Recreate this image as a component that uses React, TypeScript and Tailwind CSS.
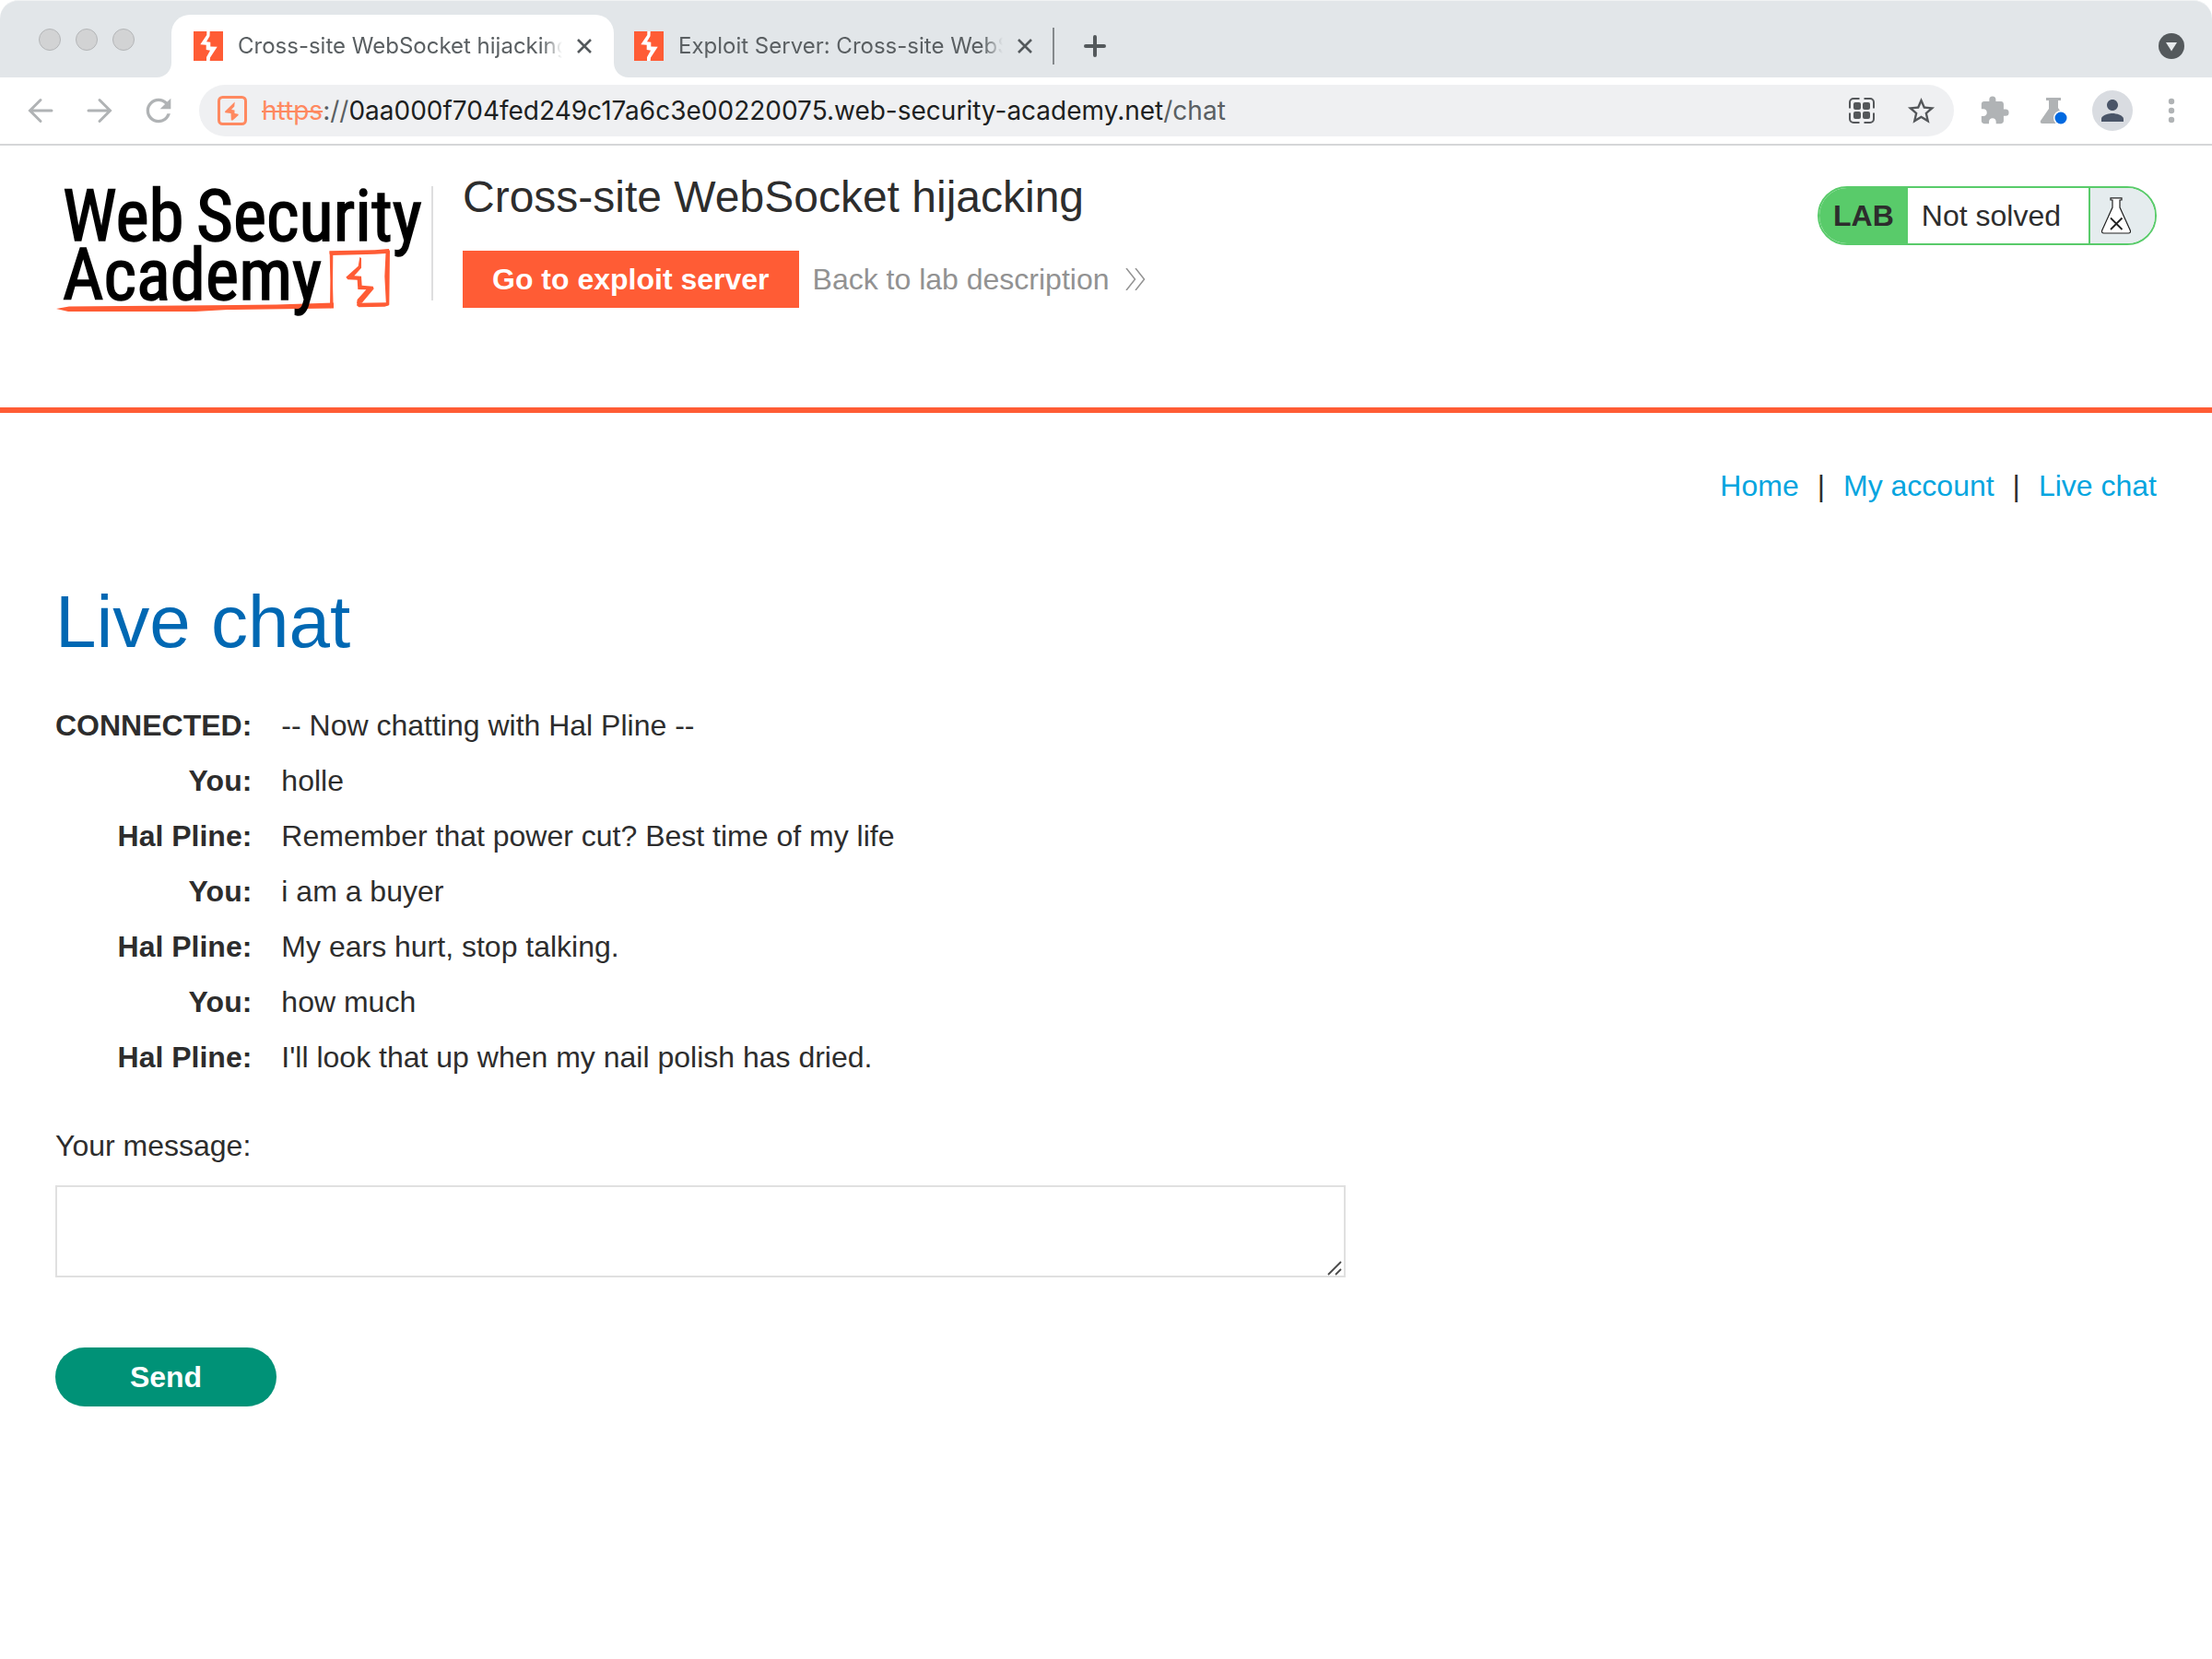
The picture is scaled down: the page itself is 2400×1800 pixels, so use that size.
import { useState } from 'react';
import { MdExtension, MdPerson, MdRefresh, MdStarBorder } from 'react-icons/md';

type Message = {
  from: string;
  text: string;
};

const MESSAGES: Message[] = [
  { from: 'CONNECTED', text: '-- Now chatting with Hal Pline --' },
  { from: 'You', text: 'holle' },
  { from: 'Hal Pline', text: 'Remember that power cut? Best time of my life' },
  { from: 'You', text: 'i am a buyer' },
  { from: 'Hal Pline', text: 'My ears hurt, stop talking.' },
  { from: 'You', text: 'how much' },
  { from: 'Hal Pline', text: "I'll look that up when my nail polish has dried." },
];

const Favicon = () => (
  <svg className="size-8 shrink-0" viewBox="0 0 32 32" aria-hidden="true">
    <rect width="32" height="32" fill="#ff5c35" />
    <path
      d="M14.3 0h3.4l-.2 5.3L14 11.3l4.3.4v4.8l7.4.3L18 28.5l-.3 3.5H14v-4l4-7.3-4.3-.7v-5.3l-6.4-.4L14.3 4z"
      fill="#fff"
    />
  </svg>
);

const CloseIcon = () => (
  <svg className="size-4" viewBox="0 0 16 16" fill="none" stroke="currentColor" strokeWidth="2.6" aria-hidden="true">
    <path d="M1 1l14 14M15 1L1 15" />
  </svg>
);

type TabProps = {
  title: string;
  active?: boolean;
};

const Tab = ({ title, active }: TabProps) => (
  <div
    className={
      active
        ? 'relative flex h-[68px] w-[480px] items-center rounded-t-[20px] bg-white pl-6 pr-4'
        : 'flex h-[68px] w-[478px] items-center pl-[22px] pr-4'
    }
  >
    {active && (
      <>
        <svg className="absolute bottom-0 -left-4 size-4" viewBox="0 0 16 16" aria-hidden="true">
          <path d="M16 0v16H0C9 16 16 9 16 0z" fill="#fff" />
        </svg>
        <svg className="absolute bottom-0 -right-4 size-4" viewBox="0 0 16 16" aria-hidden="true">
          <path d="M0 0v16h16C7 16 0 9 0 0z" fill="#fff" />
        </svg>
      </>
    )}
    <Favicon />
    <span className="ml-4 min-w-0 flex-1 overflow-hidden whitespace-nowrap text-2xl text-[#5a5f62] [mask-image:linear-gradient(to_right,black_94%,transparent)]">
      {title}
    </span>
    <button type="button" aria-label="Close tab" className="ml-2 flex size-8 items-center justify-center text-[#54595c]">
      <CloseIcon />
    </button>
  </div>
);

const TabStrip = () => (
  <div className="flex h-21 items-end rounded-t-[20px] border-t border-[#f1f3f4] bg-[#e2e6e9]">
    <div className="flex h-full items-center gap-4 pl-[42px] pr-10">
      <span className="size-6 rounded-full border border-[#b4b6b8] bg-[#d2d3d4]" />
      <span className="size-6 rounded-full border border-[#b4b6b8] bg-[#d2d3d4]" />
      <span className="size-6 rounded-full border border-[#b4b6b8] bg-[#d2d3d4]" />
    </div>
    <Tab title="Cross-site WebSocket hijacking" active />
    <Tab title="Exploit Server: Cross-site WebSocket" />
    <div className="flex h-[68px] flex-1 items-center">
      <span className="-ml-0.5 h-10 w-0.5 bg-[#85898c]" />
      <button type="button" aria-label="New tab" className="ml-6 flex size-10 items-center justify-center">
        <svg className="size-6" viewBox="0 0 24 24" stroke="#54595c" strokeWidth="4" strokeLinecap="round" aria-hidden="true">
          <path d="M12 2v20M2 12h20" />
        </svg>
      </button>
      <button type="button" aria-label="Search tabs" className="ml-auto mr-[30px] size-7">
        <svg className="size-7" viewBox="0 0 28 28" aria-hidden="true">
          <circle cx="14" cy="14" r="14" fill="#54595c" />
          <path d="M8 10h12l-6 9.5z" fill="#e8ebed" />
        </svg>
      </button>
    </div>
  </div>
);

const AddressBar = () => (
  <div className="flex h-14 min-w-0 flex-1 items-center rounded-full bg-[#eff0f2] px-5">
    <svg className="size-8 shrink-0" viewBox="0 0 32 32" aria-hidden="true">
      <rect x="1.5" y="1.5" width="29" height="29" rx="4" fill="none" stroke="#ff8960" strokeWidth="3" />
      <path d="M18.7 6.5L8 17l.3 1.3 6.200.7.3 7.5h1.700L22.700 21l-.2-1.300-4-.7V15.500l-3.500-.5 3.300-3.500z" fill="#ff8960" />
    </svg>
    <p className="ml-4 flex-1 truncate text-[28px] leading-9 text-[#5a5f62]">
      <span className="text-[#ff8960] line-through">https</span>://
      <span className="text-[#1d1f21]">0aa000f704fed249c17a6c3e00220075.web-security-academy.net</span>/chat
    </p>
    <div className="flex gap-8">
      <button type="button" aria-label="QR code" className="flex size-8 items-center justify-center">
        <svg className="size-[30px]" viewBox="0 0 30 30" aria-hidden="true">
          <path
            d="M12.5 2H6a4 4 0 0 0-4 4v6.5M17.5 2H24a4 4 0 0 1 4 4v6.5M2 17.5V24a4 4 0 0 0 4 4h6.5M28 17.5V24a4 4 0 0 1-4 4h-6.5"
            fill="none"
            stroke="#54575a"
            strokeWidth="2"
          />
          <g fill="#54575a">
            <rect x="6" y="6" width="8" height="8" rx="2" />
            <rect x="16" y="6" width="8" height="8" rx="2" />
            <rect x="6" y="16" width="8" height="8" rx="2" />
            <rect x="16" y="16" width="8" height="8" rx="2" />
          </g>
        </svg>
      </button>
      <button type="button" aria-label="Bookmark" className="flex size-8 items-center justify-center text-[#54575a]">
        <MdStarBorder className="shrink-0" size={35} />
      </button>
    </div>
  </div>
);

const Toolbar = () => (
  <div className="flex h-[74px] items-center border-b-2 border-[#d5d6d8] bg-white pl-6 pr-3 text-[#b0b3b5]">
    <div className="mr-6 flex gap-6">
      <button type="button" aria-label="Back" className="flex size-10 items-center justify-center">
        <svg className="size-7" viewBox="0 0 28 28" fill="none" stroke="currentColor" strokeWidth="3" strokeLinecap="round" aria-hidden="true">
          <path d="M26 14H3M14 2.5L2.5 14 14 25.5" />
        </svg>
      </button>
      <button type="button" aria-label="Forward" className="flex size-10 items-center justify-center">
        <svg className="size-7" viewBox="0 0 28 28" fill="none" stroke="currentColor" strokeWidth="3" strokeLinecap="round" aria-hidden="true">
          <path d="M2 14h23M14 2.5L25.5 14 14 25.5" />
        </svg>
      </button>
      <button type="button" aria-label="Reload" className="flex size-10 items-center justify-center">
        <MdRefresh size={40} />
      </button>
    </div>
    <AddressBar />
    <div className="ml-3 flex">
      <button type="button" aria-label="Extensions" className="flex h-11 w-16 items-center justify-center">
        <MdExtension size={34} />
      </button>
      <button type="button" aria-label="Experiments" className="flex h-11 w-16 items-center justify-center">
        <svg className="size-[30px]" viewBox="0 0 30 30" aria-hidden="true">
          <path d="M7 1h16v3h-3v8l9 14q1 3-2 3H3q-3 0-2-3l9-13V4H7z" fill="currentColor" />
          <circle cx="23" cy="23" r="8" fill="#fff" />
          <circle cx="23" cy="23" r="6.5" fill="#0069e0" />
        </svg>
      </button>
      <button type="button" aria-label="Profile" className="flex h-11 w-16 items-center justify-center">
        <span className="flex size-11 items-center justify-center rounded-full bg-[#d9dce1] text-[#4a5568]">
          <MdPerson size={36} />
        </span>
      </button>
      <button type="button" aria-label="Menu" className="flex h-11 w-16 items-center justify-center">
        <svg className="h-7 w-2" viewBox="0 0 8 28" fill="currentColor" aria-hidden="true">
          <circle cx="4" cy="4" r="3.2" />
          <circle cx="4" cy="14" r="3.2" />
          <circle cx="4" cy="24" r="3.2" />
        </svg>
      </button>
    </div>
  </div>
);

const Logo = () => (
  <svg className="h-[140px] w-[400px] shrink-0 overflow-visible" viewBox="0 0 400 140" role="img" aria-label="Web Security Academy">
    <g fill="#ff5c35">
      <path d="M1 133l14-2.5 225-2 62-2v6l-115 1.5-35 2H14z" />
      <g transform="translate(280 58) scale(.3333)">
        <path d="M53 40l11 5-1 100 2 76-11 2 1-90z" />
        <path d="M52 37l148-3 46-4 3 14-49 3-140 4-7-4z" />
        <path d="M236 32l13 3-1 85-1 92-10 3-5-95z" />
        <path d="M143 206l93-1 10 9-14 4-84 2-7-6z" />
        <path d="M151 57l5 3v32l-23 26 23 1 2 30 36 3 3 8-39 46-17 2 2-13 29-32-27-1-2-31-31-1-6-8 40-36z" />
      </g>
    </g>
    <g
      className="font-['Roboto_Condensed','Liberation_Sans',sans-serif]"
      fontSize="77"
      fill="#000"
      stroke="#000"
      strokeWidth="1.5"
    >
      <text x="8" y="59">Web</text>
      <text x="153" y="59">Security</text>
      <text x="8" y="123">Academy</text>
    </g>
  </svg>
);

const LabStatus = () => (
  <div className="mt-4 flex h-16 shrink-0 overflow-hidden rounded-full border-2 border-[#59cb6a] text-[32px] leading-[60px]">
    <span className="bg-[#59cb6a] px-[15px] font-bold">LAB</span>
    <span className="bg-white pl-[15px] pr-[30px]">Not solved</span>
    <span className="flex items-center border-l-2 border-[#59cb6a] bg-[#e5ecee] pl-3 pr-[26px]">
      <svg className="h-10 w-8" viewBox="0 0 32 40" fill="#fff" stroke="#222" strokeWidth="1.2" aria-hidden="true">
        <path d="M10 .8h12v2.2h-2v8l11.3 25q.8 3-2 3H2.7q-2.8 0-2-3L12 11V3h-2z" />
        <path d="M10 22.5L22.5 35M22.5 22.5L10 35" strokeWidth="1.8" />
      </svg>
    </span>
  </div>
);

const LabHeader = () => (
  <header className="flex items-start border-b-6 border-[#ff5c35] px-15 pt-7 pb-25">
    <a href="#" className="mt-4">
      <Logo />
    </a>
    <div className="mt-4 ml-2 h-31 w-0.5 bg-[#dededf]" />
    <div className="ml-8 flex-1">
      <h2 className="text-5xl leading-14">Cross-site WebSocket hijacking</h2>
      <div className="mt-[30px] flex items-center gap-[15px] text-[32px] leading-[62px]">
        <a href="#" className="bg-[#ff5c35] px-8 font-bold text-white">
          Go to exploit server
        </a>
        <a href="#" className="flex items-center gap-[18px] text-[#929292]">
          Back to lab description
          <svg className="h-6 w-[22px]" viewBox="0 0 22 24" fill="none" stroke="currentColor" strokeWidth="1.5" aria-hidden="true">
            <path d="M1 0l9.5 12L1 24M11 0l9.5 12L11 24" />
          </svg>
        </a>
      </div>
    </div>
    <LabStatus />
  </header>
);

export default function App() {
  const [message, setMessage] = useState<string>('');

  return (
    <div className="min-h-screen bg-white font-['Liberation_Sans',Arial,sans-serif] text-[#2d2d2d]">
      <div className="font-['Inter',sans-serif]">
        <TabStrip />
        <Toolbar />
      </div>

      <LabHeader />

      <main className="px-15 pt-15 text-[32px] leading-[38px]">
        <nav className="flex justify-end gap-5 text-[#05a5df]">
          <a href="#">Home</a>
          <span className="text-[#2d2d2d]">|</span>
          <a href="#">My account</a>
          <span className="text-[#2d2d2d]">|</span>
          <a href="#">Live chat</a>
        </nav>

        <h1 className="mt-[81px] text-[80px] leading-24 text-[#0068b3]">Live chat</h1>

        <table className="mt-[34px]">
          <tbody>
            {MESSAGES.map((m, i) => (
              <tr key={i} className="h-15">
                <th scope="row" className="pr-8 text-right font-bold">{m.from}:</th>
                <td>{m.text}</td>
              </tr>
            ))}
          </tbody>
        </table>

        <form className="mt-[47px]" onSubmit={(e) => e.preventDefault()}>
          <label htmlFor="message" className="block">Your message:</label>
          <div className="relative mt-6 max-w-[1400px]">
            <textarea
              id="message"
              value={message}
              onChange={(e) => setMessage(e.target.value)}
              className="block h-25 w-full resize-none border-2 border-[#e0e0e0] px-4 py-2 outline-none"
            />
            <svg className="pointer-events-none absolute right-1 bottom-0.5 size-4" viewBox="0 0 16 16" stroke="#4a4a4a" strokeWidth="1.8" aria-hidden="true">
              <path d="M1 15L15 1M9 15l6-6" />
            </svg>
          </div>
          <button type="submit" className="mt-[76px] h-16 w-60 rounded-full bg-[#009277] font-bold text-white">
            Send
          </button>
        </form>
      </main>
    </div>
  );
}
